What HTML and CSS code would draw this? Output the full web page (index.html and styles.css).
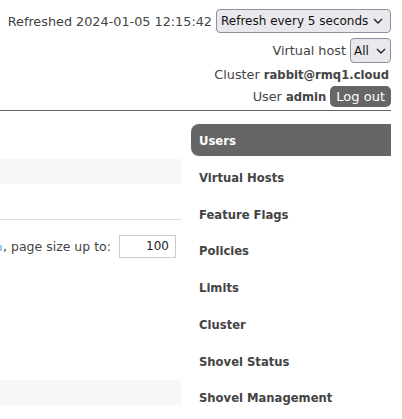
FILE: index.html
```html
<!DOCTYPE html>
<html>
<head>
<meta charset="utf-8">
<link rel="stylesheet" href="styles.css">
</head>
<body>
<div class="page">
  <header class="header">
    <div class="hrow">
      <span>Refreshed 2024-01-05 12:15:42</span>
      <div class="select wide">Refresh every 5 seconds<svg class="chev" viewBox="0 0 10 6" width="10" height="6"><path d="M1 1 L5 5 L9 1" fill="none" stroke="#222" stroke-width="1.4"/></svg></div>
    </div>
    <div class="hrow r2">
      <span>Virtual host</span>
      <div class="select small">All<svg class="chev" viewBox="0 0 10 6" width="10" height="6"><path d="M1 1 L5 5 L9 1" fill="none" stroke="#222" stroke-width="1.4"/></svg></div>
    </div>
    <div class="hrow r3">
      <span>Cluster <b>rabbit@rmq1.cloud</b></span>
    </div>
    <div class="hrow r4">
      <span>User <b>admin</b></span>
      <span class="logout">Log out</span>
    </div>
  </header>
  <div class="main">
    <div class="content">
      <div class="band b1"></div>
      <div class="rule"></div>
      <div class="pager">
        <span class="link"></span><span class="ptext">, page size up to:</span>
        <span class="input">100</span>
      </div>
      <div class="band b2"></div>
    </div>
    <nav class="nav">
      <div class="item active">Users</div>
      <div class="item">Virtual Hosts</div>
      <div class="item">Feature Flags</div>
      <div class="item">Policies</div>
      <div class="item">Limits</div>
      <div class="item">Cluster</div>
      <div class="item">Shovel Status</div>
      <div class="item">Shovel Management</div>
    </nav>
  </div>
</div>
</body>
</html>
```
FILE: styles.css
```css
html, body {
  margin: 0;
  padding: 0;
  background: #fff;
}
body {
  font-family: "DejaVu Sans", Verdana, sans-serif;
  font-size: 12.8px;
  color: #444;
  overflow: hidden;
}
.page {
  width: 391px;
  height: 419px;
  overflow: hidden;
}
.header {
  padding-top: 9px;
  display: flex;
  flex-direction: column;
  align-items: flex-end;
  border-bottom: 1px solid #666;
  padding-bottom: 3px;
}
.hrow {
  display: flex;
  align-items: center;
  justify-content: flex-end;
  gap: 4px;
  white-space: nowrap;
}
.hrow b {
  color: #444;
  font-size: 11.6px;
}
.select {
  box-sizing: border-box;
  display: flex;
  align-items: center;
  justify-content: space-between;
  background: #e9e9ed;
  border: 1px solid #8f8f9d;
  border-radius: 4px;
  color: #111;
  padding: 0 7px 0 4px;
  font-size: 12px;
}
.select.wide {
  width: 175px;
  height: 24px;
}
.select.small {
  width: 41px;
  height: 25px;
  padding: 0 4px 0 3px;
}
.chev { flex: none; }
.r2 { margin-top: 5px; }
.r3 { height: 23px; margin-right: 2px; }
.logout {
  background: #666;
  color: #fff;
  border-radius: 5px;
  height: 21px;
  line-height: 21px;
  padding: 0 6px;
  font-size: 13px;
}
.main {
  display: flex;
  gap: 10px;
  padding-top: 13px;
}
.content {
  width: 181px;
  flex: none;
  display: flex;
  flex-direction: column;
}
.band {
  background: #f7f7f7;
  height: 25px;
}
.b1 { margin-top: 35px; }
.rule {
  height: 1px;
  background: #ddd;
  margin-top: 35px;
}
.pager {
  margin-top: 15px;
  display: flex;
  align-items: center;
  height: 23px;
  white-space: nowrap;
  font-size: 12.5px;
}
.link {
  display: inline-block;
  width: 2px;
  height: 6px;
  margin-top: 2px;
  background: #9cc8ea;
  border-radius: 0 1px 1px 0;
}
.ptext { margin-left: 1px; }
.input {
  box-sizing: border-box;
  margin-left: 8px;
  width: 57px;
  height: 23px;
  border: 1px solid #ccc;
  text-align: right;
  padding-right: 6px;
  line-height: 21px;
  color: #222;
  font-size: 12px;
}
.b2 { margin-top: 122px; }
.nav {
  width: 200px;
  flex: none;
  display: flex;
  flex-direction: column;
  gap: 4.75px;
}
.item {
  box-sizing: border-box;
  height: 32px;
  line-height: 32px;
  padding-left: 8px;
  padding-top: 1px;
  font-weight: bold;
  font-size: 11.6px;
  color: #444;
  white-space: nowrap;
}
.item.active {
  background: #666;
  color: #fff;
  border-radius: 8px 0 0 8px;
}
```
